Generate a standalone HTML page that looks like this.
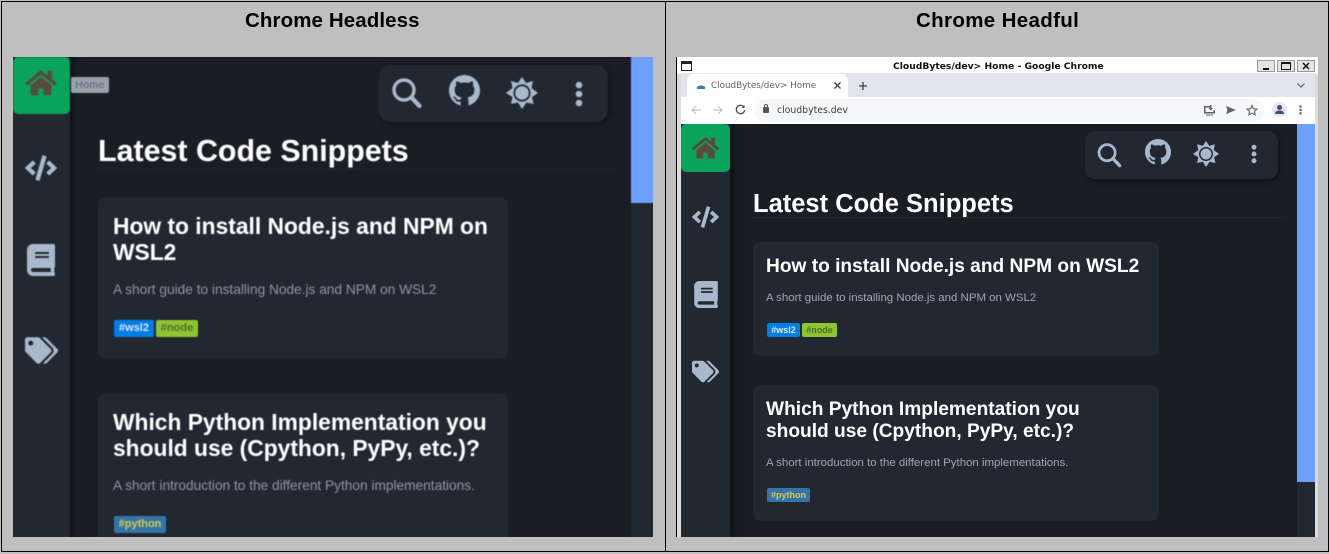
<!DOCTYPE html>
<html><head><meta charset="utf-8"><style>
html,body{margin:0;padding:0;width:1329px;height:554px;overflow:hidden;background:#bfbfbf;font-family:"Liberation Sans",sans-serif}
div,span,svg{position:absolute;box-sizing:border-box}
.t{white-space:nowrap}
.cap{font-weight:bold;font-size:20.5px;color:#000;top:9px;line-height:24px;white-space:nowrap}
.main{background:#1a1d24}
.side{background:#222831;box-shadow:3px 0 7px rgba(0,0,0,.5)}
.card{background:#222831;border-radius:8px}
.h{color:#fff;font-weight:bold;white-space:nowrap}
.p{color:#8f96a3;white-space:nowrap}
.tag{border-radius:2px;font-weight:bold;text-align:center;white-space:nowrap}
.win{white-space:nowrap;font-family:"DejaVu Sans",sans-serif}
</style></head><body>
<svg width="0" height="0" style="left:0;top:0"><defs>
<symbol id="home" viewBox="0 0 576 512"><path d="M280.37 148.26L96 300.11V464a16 16 0 0 0 16 16l112.06-.29a16 16 0 0 0 15.92-16V368a16 16 0 0 1 16-16h64a16 16 0 0 1 16 16v95.64a16 16 0 0 0 16 16.05L464 480a16 16 0 0 0 16-16V300L295.67 148.26a12.19 12.19 0 0 0-15.3 0zM571.6 251.47L488 182.56V44.05a12 12 0 0 0-12-12h-56a12 12 0 0 0-12 12v72.61L318.47 43a48 48 0 0 0-61 0L4.34 251.47a12 12 0 0 0-1.6 16.9l25.5 31A12 12 0 0 0 45.15 301l235.22-193.74a12.19 12.19 0 0 1 15.3 0L530.9 301a12 12 0 0 0 16.9-1.6l25.5-31a12 12 0 0 0-1.7-16.93z"/></symbol>
<symbol id="code" viewBox="0 0 640 512"><path d="M278.9 511.5l-61-17.7c-6.4-1.8-10-8.5-8.2-14.9L346.2 8.7c1.8-6.4 8.5-10 14.9-8.2l61 17.7c6.4 1.8 10 8.5 8.2 14.9L293.8 503.3c-1.9 6.4-8.5 10.1-14.9 8.2zm-114-112.2l43.5-46.4c4.6-4.9 4.3-12.7-.8-17.2L117 256l90.6-79.7c5.1-4.5 5.5-12.3.8-17.2l-43.5-46.4c-4.5-4.8-12.1-5.1-17-.5L3.8 247.2c-5.1 4.7-5.1 12.8 0 17.5l144.1 135.1c4.9 4.6 12.5 4.4 17-.5zm327.2.6l144.1-135.1c5.1-4.7 5.1-12.8 0-17.5L492.1 112.1c-4.8-4.5-12.4-4.3-17 .5L431.6 159c-4.6 4.9-4.3 12.7.8 17.2L523 256l-90.6 79.7c-5.1 4.5-5.5 12.3-.8 17.2l43.5 46.4c4.5 4.9 12.1 5.1 17 .6z"/></symbol>
<symbol id="book" viewBox="0 0 448 512"><path d="M448 360V24c0-13.3-10.7-24-24-24H96C43 0 0 43 0 96v320c0 53 43 96 96 96h328c13.3 0 24-10.7 24-24v-16c0-7.5-3.5-14.3-8.9-18.7-4.2-15.4-4.2-59.3 0-74.7 5.4-4.3 8.9-11.1 8.9-18.6zM128 134c0-3.3 2.7-6 6-6h212c3.3 0 6 2.7 6 6v20c0 3.3-2.7 6-6 6H134c-3.3 0-6-2.7-6-6v-20zm0 64c0-3.3 2.7-6 6-6h212c3.3 0 6 2.7 6 6v20c0 3.3-2.7 6-6 6H134c-3.3 0-6-2.7-6-6v-20zm253.4 250H96c-17.7 0-32-14.3-32-32 0-17.6 14.4-32 32-32h285.4c-1.9 17.1-1.9 46.9 0 64z"/></symbol>
<symbol id="tags" viewBox="0 0 640 512"><path d="M497.941 225.941L286.059 14.059A48 48 0 0 0 252.118 0H48C21.49 0 0 21.49 0 48v204.118a48 48 0 0 0 14.059 33.941l211.882 211.882c18.744 18.745 49.136 18.746 67.882 0l204.118-204.118c18.745-18.745 18.745-49.137 0-67.882zM112 160c-26.51 0-48-21.49-48-48s21.49-48 48-48 48 21.49 48 48-21.49 48-48 48zm513.941 133.823L421.823 497.941c-18.745 18.745-49.137 18.745-67.882 0l-.36-.36L527.64 323.522c16.999-16.999 26.36-39.6 26.36-63.64s-9.362-46.641-26.36-63.64L331.397 0h48.721a48 48 0 0 1 33.941 14.059l211.882 211.882c18.745 18.745 18.745 49.137 0 67.882z"/></symbol>
<symbol id="search" viewBox="0 0 30 31"><circle cx="12" cy="12" r="10" fill="none" stroke="#a9b8cc" stroke-width="3.4"/><path d="M19.5 19.5L27.5 28" fill="none" stroke="#a9b8cc" stroke-width="4.2" stroke-linecap="round"/></symbol>
<symbol id="gh" viewBox="0 0 16 16"><path d="M8 0C3.58 0 0 3.58 0 8c0 3.54 2.29 6.53 5.47 7.59.4.07.55-.17.55-.38 0-.19-.01-.82-.01-1.49-2.01.37-2.53-.49-2.69-.94-.09-.23-.48-.94-.82-1.13-.28-.15-.68-.52-.01-.53.63-.01 1.08.58 1.23.82.72 1.21 1.87.87 2.33.66.07-.52.28-.87.51-1.07-1.78-.2-3.64-.89-3.64-3.95 0-.87.31-1.59.82-2.15-.08-.2-.36-1.02.08-2.12 0 0 .67-.21 2.2.82.64-.18 1.32-.27 2-.27.68 0 1.36.09 2 .27 1.53-1.04 2.2-.82 2.2-.82.44 1.1.16 1.92.08 2.12.51.56.82 1.27.82 2.15 0 3.07-1.87 3.75-3.65 3.95.29.25.54.73.54 1.48 0 1.07-.01 1.93-.01 2.2 0 .21.15.46.55.38A8.013 8.013 0 0016 8c0-4.42-3.58-8-8-8z"/></symbol>
<symbol id="sun" viewBox="0 0 32 32"><path d="M16 0l4 6 7-2-1.500 7L32 16l-6 4 1.500 7-7-1.500L16 32l-4-6.500-7 1.500 1.500-7L0 16l6.500-5L5 4l7 2z"/><circle cx="16" cy="16" r="8.600" fill="#222831"/><circle cx="16" cy="16" r="6.800"/></symbol>
<symbol id="dots" viewBox="0 0 8 26"><circle cx="4" cy="4" r="3.300"/><circle cx="4" cy="13" r="3.300"/><circle cx="4" cy="22" r="3.300"/></symbol>
</defs></svg>

<div style="left:1px;top:1px;width:1328px;height:551px;border:1px solid #000"></div>
<div style="left:665px;top:1px;width:1px;height:551px;background:#000"></div>
<div class="cap" style="left:245px;letter-spacing:.1px">Chrome Headless</div>
<div class="cap" style="left:916px;letter-spacing:.35px">Chrome Headful</div>

<!-- LEFT -->
<div style="left:13px;top:57px;width:640px;height:480px;overflow:hidden">
<div class="main" style="left:-10px;top:-10px;width:660px;height:500px;filter:blur(.65px)">
<div style="left:10px;top:10px;width:640px;height:480px">
  <div style="left:618px;top:-10px;width:32px;height:500px;background:#222831"></div>
  <div style="left:618px;top:-10px;width:32px;height:156px;background:#6ea0ff"></div>
  <div class="side" style="left:-10px;top:-10px;width:67px;height:500px"></div>
  <div style="left:0;top:0;width:57px;height:57px;background:#0aa35a;border-radius:5px"></div>
  <svg style="left:12px;top:12px;fill:#5a4a3c" width="32" height="28"><use href="#home"/></svg>
  <svg style="left:12px;top:98px;fill:#a9b8cc" width="32" height="26"><use href="#code"/></svg>
  <svg style="left:14px;top:187px;fill:#a9b8cc" width="28" height="32"><use href="#book"/></svg>
  <svg style="left:12px;top:280px;fill:#a9b8cc" width="33" height="27"><use href="#tags"/></svg>
  <div class="t" style="left:58px;top:20px;width:38px;height:16px;background:#98a0ae;border-radius:2px;color:#5c6270;font-size:10.500px;letter-spacing:.3px;line-height:16px;text-align:center">Home</div>

  <div style="left:366px;top:8px;width:229px;height:57px;background:#222831;border-radius:12px;box-shadow:2px 2px 6px rgba(0,0,0,.4)"></div>
  <svg style="left:379px;top:21px" width="30" height="31"><use href="#search"/></svg>
  <svg style="left:436px;top:18px;fill:#a9b8cc" width="31" height="31"><use href="#gh"/></svg>
  <svg style="left:493px;top:20px;fill:#a9b8cc" width="32" height="32"><use href="#sun"/></svg>
  <svg style="left:562px;top:24px;fill:#a9b8cc" width="8" height="26"><use href="#dots"/></svg>

  <div class="h" style="left:85px;top:75px;font-size:30.400px;line-height:38px">Latest Code Snippets</div>
  <div style="left:85px;top:112px;width:517px;height:1px;background:#222831"></div>

  <div class="card" style="left:85px;top:140px;width:410px;height:162px"></div>
  <div class="h" style="left:100px;top:156px;font-size:22.800px;line-height:26px">How to install Node.js and NPM on<br>WSL2</div>
  <div class="p" style="left:100px;top:224px;font-size:13.700px;line-height:18px">A short guide to installing Node.js and NPM on WSL2</div>
  <div class="tag" style="left:101px;top:263px;width:40px;height:17px;background:#007de6;color:#dbe9f7;font-size:11px;line-height:16px">#wsl2</div>
  <div class="tag" style="left:143px;top:263px;width:42px;height:17px;background:#8dc42f;color:#4f6f2c;font-size:11px;line-height:16px">#node</div>

  <div class="card" style="left:85px;top:336px;width:410px;height:180px"></div>
  <div class="h" style="left:100px;top:352px;font-size:22.800px;line-height:26px">Which Python Implementation you<br>should use (Cpython, PyPy, etc.)?</div>
  <div class="p" style="left:100px;top:420px;font-size:13.700px;line-height:18px">A short introduction to the different Python implementations.</div>
  <div class="tag" style="left:101px;top:459px;width:52px;height:17px;background:#3474a8;color:#d9c94a;font-size:11px;line-height:16px">#python</div>
</div></div></div>

<!-- RIGHT -->
<div style="left:676px;top:57px;width:1px;height:480px;background:#000"></div>
<div style="left:677px;top:57px;width:641px;height:480px;background:#dcdcdc"></div>
<div style="left:677px;top:57px;width:641px;height:17px;background:#fff"></div>
<div style="left:681px;top:61px;width:11px;height:10px;border:1.500px solid #222;border-top-width:3px;background:#fff"></div>
<div class="win" style="left:893px;top:60px;font-size:9.200px;font-weight:bold;line-height:13px;color:#111">CloudBytes/dev&gt; Home - Google Chrome</div>
<div style="left:1257px;top:60px;width:18px;height:12px;background:#e4e4e4;border:1px solid #999"></div>
<div style="left:1263px;top:68px;width:6px;height:1.500px;background:#111"></div>
<div style="left:1277px;top:60px;width:18px;height:12px;background:#e4e4e4;border:1px solid #999"></div>
<div style="left:1281px;top:62px;width:10px;height:8px;border:1px solid #111;border-top-width:2px"></div>
<div style="left:1297px;top:60px;width:18px;height:12px;background:#e4e4e4;border:1px solid #999"></div>
<svg style="left:1302px;top:62px" width="8" height="8"><path d="M1 1l6 6M7 1l-6 6" stroke="#111" stroke-width="1.500"/></svg>

<div style="left:681px;top:73px;width:634px;height:24px;background:#e2e4e9"></div>
<div style="left:687px;top:74px;width:161px;height:23px;background:#fff;border-radius:7px 7px 0 0"></div>
<svg style="left:696px;top:83px" width="10" height="7"><path d="M1 6a2 2 0 0 1 2-3a2.500 2.500 0 0 1 4 0a2 2 0 0 1 2 3z" fill="#2e7fc4"/><path d="M3 3a2.500 2.500 0 0 1 4 0z" fill="#f0b429"/></svg>
<div class="win" style="left:711px;top:80px;font-size:8.800px;line-height:13px;color:#5f6368">CloudBytes/dev&gt; Home</div>
<svg style="left:833px;top:81px" width="9" height="9"><path d="M1.500 1.500l6 6M7.500 1.500l-6 6" stroke="#3c4043" stroke-width="1.300"/></svg>
<svg style="left:858px;top:81px" width="10" height="10"><path d="M5 1v8M1 5h8" stroke="#3c4043" stroke-width="1.300"/></svg>
<svg style="left:1296px;top:82px" width="10" height="7"><path d="M1.500 1.500L5 5l3.500-3.500" stroke="#5f6368" stroke-width="1.200" fill="none"/></svg>

<div style="left:681px;top:97px;width:634px;height:27px;background:#fff"></div>
<div style="left:754px;top:99px;width:510px;height:23px;background:#f6f7f9;border-radius:12px"></div>
<svg style="left:690px;top:104px" width="60" height="12" fill="none"><path d="M11 6H2M6 2L2 6l4 4" stroke="#c0c3c8" stroke-width="1.200"/><path d="M23 6h9M28 2l4 4-4 4" stroke="#c0c3c8" stroke-width="1.200"/><path d="M53.500 2.500a4.200 4.200 0 1 0 1.200 3.500" stroke="#4a4d52" stroke-width="1.300"/><path d="M54.500 1v3h-3z" fill="#4a4d52"/></svg>
<div style="left:763px;top:107px;width:6px;height:6px;background:#555;border-radius:1px"></div>
<div style="left:764px;top:104px;width:4px;height:4px;border:1px solid #555;border-bottom:0;border-radius:2px 2px 0 0"></div>
<div class="win" style="left:777px;top:104px;font-size:9.300px;line-height:14px;color:#3c4043">cloudbytes.dev</div>
<svg style="left:1203px;top:104px" width="60" height="13" fill="#5f6368"><path d="M1 2h6v1.500H2.500V8h8V6H12v3.500H1z"/><path d="M7 1h1.500v3H10L7.700 6.500 5.500 4H7zM3 10.500h7v1H3z"/><path d="M23 2l10 4-10 4 1.500-4z"/><path d="M49 1.500l1.500 3.200 3.500.4-2.600 2.300.7 3.400-3.100-1.700-3.100 1.700.7-3.400L44 5.100l3.500-.4z" fill="none" stroke="#5f6368" stroke-width="1.100"/></svg>
<div style="left:1272px;top:102px;width:15px;height:15px;background:#e4e7ee;border-radius:50%"></div>
<svg style="left:1274px;top:104px" width="11" height="11" fill="#3d5170"><circle cx="5.500" cy="3.500" r="2.500"/><path d="M1 10c0-2.500 2-3.500 4.500-3.500S10 7.500 10 10z"/></svg>
<svg style="left:1299px;top:105px;fill:#5f6368" width="3" height="10"><use href="#dots"/></svg>

<div class="main" style="left:681px;top:124px;width:634px;height:413px;overflow:hidden">
  <div style="left:616px;top:0;width:18px;height:413px;background:#222831"></div>
  <div style="left:616px;top:0;width:18px;height:358px;background:#6ea0ff"></div>
  <div class="side" style="left:0;top:0;width:49px;height:413px"></div>
  <div style="left:0;top:0;width:49px;height:48px;background:#0aa35a;border-radius:5px"></div>
  <svg style="left:11px;top:12px;fill:#5a4a3c" width="27" height="24"><use href="#home"/></svg>
  <svg style="left:11px;top:82px;fill:#a9b8cc" width="27" height="22"><use href="#code"/></svg>
  <svg style="left:13px;top:157px;fill:#a9b8cc" width="24" height="27"><use href="#book"/></svg>
  <svg style="left:11px;top:236px;fill:#a9b8cc" width="27" height="23"><use href="#tags"/></svg>

  <div style="left:404px;top:7px;width:193px;height:48px;background:#222831;border-radius:10px;box-shadow:2px 2px 6px rgba(0,0,0,.4)"></div>
  <svg style="left:416px;top:19px" width="25" height="25"><use href="#search"/></svg>
  <svg style="left:464px;top:15px;fill:#a9b8cc" width="26" height="26"><use href="#gh"/></svg>
  <svg style="left:512px;top:17px;fill:#a9b8cc" width="26" height="26"><use href="#sun"/></svg>
  <svg style="left:570px;top:20px;fill:#a9b8cc" width="6" height="20"><use href="#dots"/></svg>

  <div class="h" style="left:72px;top:64px;font-size:25.500px;line-height:32px">Latest Code Snippets</div>
  <div style="left:72px;top:93px;width:532px;height:1px;background:#222831"></div>

  <div class="card" style="left:72px;top:118px;width:406px;height:114px"></div>
  <div class="h" style="left:85px;top:132px;font-size:19.150px;line-height:22px">How to install Node.js and NPM on WSL2</div>
  <div class="p" style="left:85px;top:167px;font-size:11.450px;line-height:15px;color:#a0a7b3">A short guide to installing Node.js and NPM on WSL2</div>
  <div class="tag" style="left:86px;top:199px;width:33px;height:14px;background:#007de6;color:#dbe9f7;font-size:9px;line-height:14px">#wsl2</div>
  <div class="tag" style="left:121px;top:199px;width:35px;height:14px;background:#8dc42f;color:#4f6f2c;font-size:9px;line-height:14px">#node</div>

  <div class="card" style="left:72px;top:261px;width:406px;height:136px"></div>
  <div class="h" style="left:85px;top:275px;font-size:19.150px;line-height:22px">Which Python Implementation you<br>should use (Cpython, PyPy, etc.)?</div>
  <div class="p" style="left:85px;top:332px;font-size:11.450px;line-height:15px;color:#a0a7b3">A short introduction to the different Python implementations.</div>
  <div class="tag" style="left:86px;top:364px;width:43px;height:14px;background:#3474a8;color:#d9c94a;font-size:9px;line-height:14px">#python</div>
</div>
</body></html>
